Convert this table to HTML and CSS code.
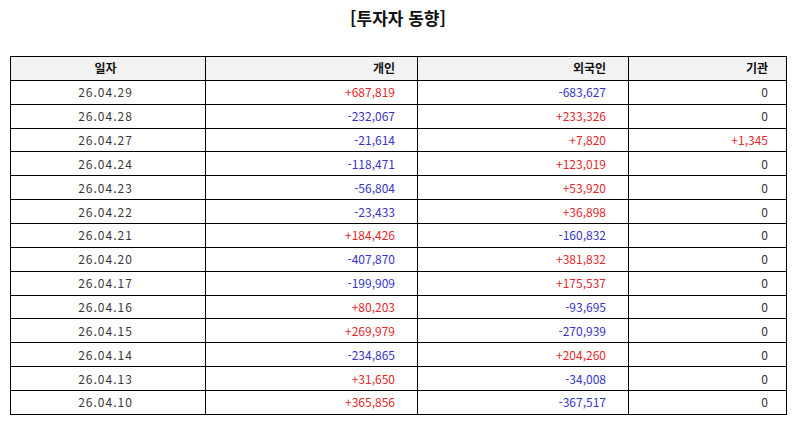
FILE: index.html
```html
<!DOCTYPE html>
<html lang="ko">
<head>
<meta charset="utf-8">
<link rel="stylesheet" href="styles.css">
</head>
<body>
<div class="page">
  <h1 class="title">[투자자 동향]</h1>
  <table class="grid">
    <colgroup>
      <col class="c-date"><col class="c-ind"><col class="c-for"><col class="c-inst">
    </colgroup>
    <thead>
      <tr><th class="ctr">일자</th><th>개인</th><th>외국인</th><th class="last">기관</th></tr>
    </thead>
    <tbody>
      <tr><td class="ctr">26.04.29</td><td class="up">+687,819</td><td class="dn">-683,627</td><td class="last">0</td></tr>
      <tr><td class="ctr">26.04.28</td><td class="dn">-232,067</td><td class="up">+233,326</td><td class="last">0</td></tr>
      <tr><td class="ctr">26.04.27</td><td class="dn">-21,614</td><td class="up">+7,820</td><td class="last up">+1,345</td></tr>
      <tr><td class="ctr">26.04.24</td><td class="dn">-118,471</td><td class="up">+123,019</td><td class="last">0</td></tr>
      <tr><td class="ctr">26.04.23</td><td class="dn">-56,804</td><td class="up">+53,920</td><td class="last">0</td></tr>
      <tr><td class="ctr">26.04.22</td><td class="dn">-23,433</td><td class="up">+36,898</td><td class="last">0</td></tr>
      <tr><td class="ctr">26.04.21</td><td class="up">+184,426</td><td class="dn">-160,832</td><td class="last">0</td></tr>
      <tr><td class="ctr">26.04.20</td><td class="dn">-407,870</td><td class="up">+381,832</td><td class="last">0</td></tr>
      <tr><td class="ctr">26.04.17</td><td class="dn">-199,909</td><td class="up">+175,537</td><td class="last">0</td></tr>
      <tr><td class="ctr">26.04.16</td><td class="up">+80,203</td><td class="dn">-93,695</td><td class="last">0</td></tr>
      <tr><td class="ctr">26.04.15</td><td class="up">+269,979</td><td class="dn">-270,939</td><td class="last">0</td></tr>
      <tr><td class="ctr">26.04.14</td><td class="dn">-234,865</td><td class="up">+204,260</td><td class="last">0</td></tr>
      <tr><td class="ctr">26.04.13</td><td class="up">+31,650</td><td class="dn">-34,008</td><td class="last">0</td></tr>
      <tr><td class="ctr">26.04.10</td><td class="up">+365,856</td><td class="dn">-367,517</td><td class="last">0</td></tr>
    </tbody>
  </table>
</div>
</body>
</html>
```
FILE: styles.css
```css
html, body {
  margin: 0;
  padding: 0;
  background: #ffffff;
}
body {
  font-family: "Noto Sans CJK KR", "Noto Sans", sans-serif;
  color: #333333;
}
.page {
  padding: 7px 8px 0 10px;
}
.title {
  margin: 0;
  height: 24px;
  line-height: 22px;
  text-align: center;
  font-size: 17px;
  font-weight: bold;
  color: #111111;
}
.grid {
  margin-top: 25px;
  width: 776px;
  border-collapse: collapse;
  table-layout: fixed;
  font-size: 12px;
}
.c-date { width: 195px; }
.c-ind { width: 212px; }
.c-for { width: 211px; }
.c-inst { width: 158px; }
.grid tr {
  height: 23.87px;
}
.grid th, .grid td {
  border: 1px solid #000000;
  padding: 0 22px 0 4px;
  text-align: right;
  line-height: 16px;
}
.grid .last {
  padding-right: 18px;
}
.grid th {
  background: #f2f2f2;
  font-weight: bold;
  color: #111111;
}
.grid .ctr {
  text-align: center;
  padding: 0 5px 0 0;
}
.grid td.ctr {
  letter-spacing: 1px;
  color: #3a3a3a;
}
.up { color: #e2282b; }
.dn { color: #3535c8; }
```
